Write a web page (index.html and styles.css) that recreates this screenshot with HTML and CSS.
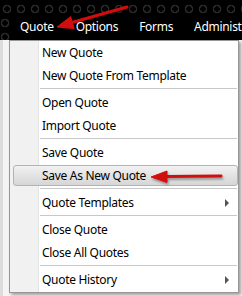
FILE: index.html
```html
<!DOCTYPE html>
<html>
<head>
<meta charset="utf-8">
<link rel="stylesheet" href="styles.css">
</head>
<body>
<div class="page">
  <div class="topbar">
    <nav class="nav">
      <span class="nav-item first">Quote</span>
      <span class="nav-item">Options</span>
      <span class="nav-item">Forms</span>
      <span class="nav-item">Administ</span>
    </nav>
  </div>
  <div class="below">
    <ul class="menu">
      <li class="item">New Quote</li>
      <li class="item">New Quote From Template</li>
      <li class="sep"></li>
      <li class="item">Open Quote</li>
      <li class="item">Import Quote</li>
      <li class="sep"></li>
      <li class="item">Save Quote</li>
      <li class="item active">Save As New Quote</li>
      <li class="sep"></li>
      <li class="item sub">Quote Templates</li>
      <li class="sep"></li>
      <li class="item">Close Quote</li>
      <li class="item">Close All Quotes</li>
      <li class="sep"></li>
      <li class="item sub">Quote History</li>
    </ul>
  </div>
  <svg class="marks" width="242" height="296" viewBox="0 0 242 296">
    <defs>
      <filter id="sh" x="-20%" y="-50%" width="140%" height="200%">
        <feDropShadow dx="1" dy="2" stdDeviation="1.2" flood-color="#000" flood-opacity="0.35"/>
      </filter>
    </defs>
    <g filter="url(#sh)" fill="#d20a0a" stroke="#d20a0a">
      <line x1="127" y1="7" x2="71" y2="22.8" stroke-width="3" stroke-linecap="round"/>
      <polygon points="57,27 74.2,28.6 70.6,16.6" stroke-width="1" stroke-linejoin="round"/>
      <line x1="221" y1="176" x2="166" y2="176.5" stroke-width="3" stroke-linecap="round"/>
      <polygon points="151,177 167,171 167,182.5" stroke-width="1" stroke-linejoin="round"/>
    </g>
  </svg>
</div>
</body>
</html>
```
FILE: styles.css
```css
html, body {
  margin: 0;
  padding: 0;
  background: #ffffff;
}

.page {
  position: relative;
  width: 242px;
  height: 296px;
  overflow: hidden;
  background: #ececec;
  font-family: "Noto Sans", "Open Sans", sans-serif;
  letter-spacing: -0.3px;
}

.topbar {
  position: relative;
  height: 40px;
  background-color: #000;
}

.topbar::before {
  content: "";
  position: absolute;
  left: 0;
  top: 2px;
  width: 242px;
  height: 15px;
  background-image: radial-gradient(circle at 7px 7px, transparent 2.5px, #2a2a2a 3px, #2a2a2a 4px, transparent 4.6px);
  background-size: 14px 14px;
}

.topbar::after {
  content: "";
  position: absolute;
  left: -2px;
  top: 16px;
  width: 12px;
  height: 30px;
  background-image: radial-gradient(circle at 7px 7px, transparent 2.5px, #2a2a2a 3px, #2a2a2a 4px, transparent 4.6px);
  background-size: 14px 14px;
}

.nav {
  position: relative;
  z-index: 1;
  display: flex;
  gap: 21px;
  padding: 18px 0 0 20px;
  white-space: nowrap;
  color: #ffffff;
  font-size: 12px;
  line-height: 18px;
}

.nav-item.first {
  margin-right: 1px;
}

.below {
  position: relative;
  height: 256px;
  background: linear-gradient(to right, #dcdcdc 0 3px, #f4f4f4 3px);
}

.menu {
  position: relative;
  list-style: none;
  margin: 0 0 0 9px;
  padding: 1px 0 0 0;
  width: 228px;
  height: 251px;
  border: 1px solid #979797;
  border-top: 0;
  background: linear-gradient(to right, #f1f1f1 0 28px, #e2e3e3 28px 29px, #ffffff 29px);
  box-shadow: 2px 2px 3px rgba(0, 0, 0, 0.35);
  font-size: 12px;
  color: #000;
}

.menu::before {
  content: "";
  position: absolute;
  left: -1px;
  right: -1px;
  top: 0;
  height: 1px;
  background: #979797;
}

.item {
  position: relative;
  height: 23px;
  line-height: 23px;
  padding-left: 32px;
  white-space: nowrap;
}

.item.active {
  isolation: isolate;
}

.item.active::before {
  content: "";
  position: absolute;
  left: 3px;
  right: 0;
  top: 1px;
  bottom: 1px;
  border: 1px solid #b3b3b3;
  border-radius: 3px;
  background: linear-gradient(to bottom, #f2f2f2, #e3e3e3 50%, #d6d6d6);
  z-index: -1;
}

.item.sub::after {
  content: "";
  position: absolute;
  right: 9px;
  top: 8px;
  border-left: 4px solid #555;
  border-top: 4px solid transparent;
  border-bottom: 4px solid transparent;
}

.sep {
  height: 1px;
  margin: 1px 1px 2px 30px;
  background: #c8c8c8;
}

.marks {
  position: absolute;
  left: 0;
  top: 0;
}
```
